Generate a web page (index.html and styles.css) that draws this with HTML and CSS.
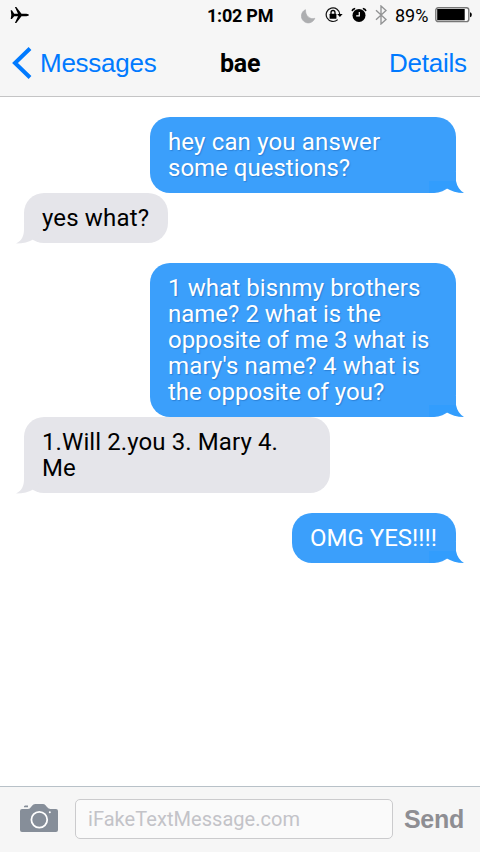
FILE: index.html
```html
<!DOCTYPE html>
<html lang="en">
<head>
<meta charset="utf-8">
<title>Messages</title>
<link rel="stylesheet" href="styles.css">
</head>
<body>
<svg class="defs" width="0" height="0">
  <symbol id="tail" viewBox="0 0 35 22"><path d="M18 0H27V10H18Z" fill="#3b9ffb"/><path d="M0 9H27Q28.5 17 35 21C28 21 22 19 17 16C13 19 7 20.7 0 21Z"/></symbol>
  <symbol id="tail-left" viewBox="0 0 24 20"><path d="M8 0V5C8 12 6 16.5 0 19.5C7 19.5 13 18 18 15L24 8V0Z"/></symbol>
</svg>
<header class="header">
  <div class="status">
    <svg class="plane" width="20" height="18" viewBox="0 0 20 18"><path d="M0.7 4.2H1.9L4.2 7.8H8L4.9 1H6.3L11.5 7.8H16.4Q19 8.1 19 9Q19 9.9 16.4 10.2H11.5L6.3 17H4.9L8 10.2H4.2L1.9 13H0.7L1.3 9Z"/></svg>
    <span class="time">1:02 PM</span>
    <div class="indicators">
      <svg class="moon" width="16" height="16" viewBox="0 0 16 16"><path d="M4.5 1.7A6.9 6.9 0 1 0 13.8 10.3C9.5 12 4 8 4.5 1.7Z" fill="#adaeb0" stroke="#adaeb0" stroke-width=".7"/></svg>
      <svg class="lock" width="18" height="16" viewBox="0 0 18 16"><path d="M12.7 12.6A6.8 6.8 0 1 1 14.8 7.5" fill="none" stroke="#111" stroke-width="1.2"/><path d="M12.2 7H17.6L14.9 10Z"/><rect x="4.6" y="6.8" width="6.8" height="5" rx=".5"/><path d="M6 7.5V5.5a2 2 0 0 1 4 0V7.5" fill="none" stroke="#000" stroke-width="1.3"/></svg>
      <svg class="alarm" width="16" height="16" viewBox="0 0 16 16"><circle cx="8" cy="8.4" r="6.5"/><path d="M1.2 4.2Q1.5 1.8 4.2 1.4M14.8 4.2Q14.5 1.8 11.8 1.4" fill="none" stroke="#000" stroke-width="1.5"/><path d="M8.3 5V8.8H5.2" fill="none" stroke="#fff" stroke-width="1.2"/></svg>
      <svg class="bluetooth" width="12" height="20" viewBox="0 0 12 20"><path d="M1 5.2L11 14.5L6 19V1L11 5.5L1 14.8" fill="none" stroke="#929394" stroke-width="1.35"/></svg>
      <span class="percent">89%</span>
      <svg class="battery" width="38" height="16" viewBox="0 0 38 16"><rect x=".8" y=".8" width="33" height="13.8" rx="2.4" fill="#fff" stroke="#777" stroke-width="1.4"/><rect x="2.2" y="2" width="27.5" height="11.3"/><path d="M35 5.2Q36.8 5.4 36.8 7.7Q36.8 10 35 10.2Z"/></svg>
    </div>
  </div>
  <nav class="nav">
    <a class="back"><svg width="20" height="32" viewBox="0 0 20 32"><path d="M18 1.5L3 16L18 30.5" fill="none" stroke="#007aff" stroke-width="4"/></svg><span class="back-label">Messages</span></a>
    <h1 class="title">bae</h1>
    <a class="details">Details</a>
  </nav>
</header>
<main class="thread">
  <div class="bubble sent"><svg class="tail"><use href="#tail"/></svg><span class="wide">hey can you answer</span><br>some questions?</div>
  <div class="bubble received reply"><span class="wide">yes what?</span><svg class="tail-left"><use href="#tail-left"/></svg></div>
  <div class="bubble sent"><svg class="tail"><use href="#tail"/></svg><span class="loose">1 what bisnmy brothers</span><br>name? 2 what is the<br><span class="tight">opposite of me 3 what is</span><br><span class="wide">mary's name? 4 what is</span><br>the opposite of you?</div>
  <div class="bubble received"><span class="loose">1.Will 2.you 3. Mary 4.</span><br>Me<svg class="tail-left"><use href="#tail-left"/></svg></div>
  <div class="bubble sent short"><svg class="tail"><use href="#tail"/></svg>OMG YES!!!!</div>
</main>
<footer class="composer">
  <svg class="camera" width="38" height="30" viewBox="0 0 38 30"><path fill="#868e99" d="M2 6H8Q10 6 11 4L13 1.8Q14 1 15.5 1H23Q24.5 1 25.3 2L27 4Q28.5 6 30.5 6H36Q38 6 38 8V27Q38 29 36 29H2Q0 29 0 27V8Q0 6 2 6ZM5 2.5H8V4.2H4V3.2Z"/><circle cx="19.3" cy="16.7" r="7.9" fill="none" stroke="#fff" stroke-width="1.8"/><circle cx="29.8" cy="9.3" r="1" fill="#fff"/></svg>
  <div class="field">iFakeTextMessage.com</div>
  <span class="send">Send</span>
</footer>
</body>
</html>
```
FILE: styles.css
```css
* { box-sizing: border-box; }
body { margin: 0; width: 480px; height: 852px; overflow: hidden; display: flex; flex-direction: column; background: #fff; color: #000; font-family: Roboto, sans-serif; }
svg { display: block; flex: none; }
.defs { position: absolute; }
.header { height: 97px; flex: none; background: #f6f6f6; border-bottom: 1px solid #c4c4c5; }
.status { height: 32px; display: grid; grid-template-columns: 207px 93px 1fr; }
.plane { margin: 6px 0 0 10px; }
.time { font-size: 18px; line-height: 32px; font-weight: 700; letter-spacing: -.25px; white-space: nowrap; }
.indicators { display: flex; align-items: flex-start; }
.moon { margin: 8px 0 0 1px; }
.lock { margin: 7px 0 0 8px; }
.alarm { margin: 7px 0 0 8px; }
.bluetooth { margin: 5px 0 0 8px; }
.percent { width: 40px; margin-left: 8px; font-size: 18px; line-height: 32px; }
.battery { margin-top: 7px; }
.nav { height: 64px; display: grid; grid-template-columns: 220px 1fr 91px; font-family: "Liberation Sans", sans-serif; font-size: 26px; line-height: 62px; letter-spacing: -.25px; color: #007aff; }
.back { display: flex; }
.back svg { margin: 15px 0 0 12px; }
.back-label { margin-left: 8px; }
.title { margin: 0; color: #000; font: 700 25px/64px Roboto, sans-serif; }
.thread { flex: 1; display: flex; flex-direction: column; padding: 20px 24px; }
.bubble { position: relative; width: 306px; padding: 12px 18px; border-radius: 20px; font-size: 24px; line-height: 26px; white-space: nowrap; }
.wide { letter-spacing: .15px; }
.loose { letter-spacing: .1px; }
.tight { letter-spacing: -.05px; }
.sent { align-self: flex-end; background: #3b9ffb; border-bottom-right-radius: 22px; color: #fff; text-shadow: 1px 1px 1px rgba(30, 100, 180, .5); }
.received { align-self: flex-start; background: #e5e5ea; margin-bottom: 20px; }
.reply { width: 144px; }
.short { width: 164px; text-shadow: none; }
.tail { position: absolute; right: -8px; bottom: -1px; width: 35px; height: 22px; fill: #329dfd; }
.tail-left { position: absolute; left: -8px; bottom: -1px; width: 24px; height: 20px; fill: #e5e5ea; }
.composer { height: 66px; flex: none; display: flex; background: #f6f6f6; border-top: 1px solid #b8c1c8; }
.camera { margin: 16px 0 0 20px; }
.field { width: 318px; height: 40px; margin: 12px 0 0 17px; padding-left: 12px; border: 1px solid #cbcbcd; border-radius: 5px; background: #fafafa; color: #c3c3c8; font-size: 20px; line-height: 38px; letter-spacing: .05px; }
.send { margin-left: 11px; color: #8e8e93; font: 700 25px/64px "Liberation Sans", sans-serif; letter-spacing: -.3px; }
```
